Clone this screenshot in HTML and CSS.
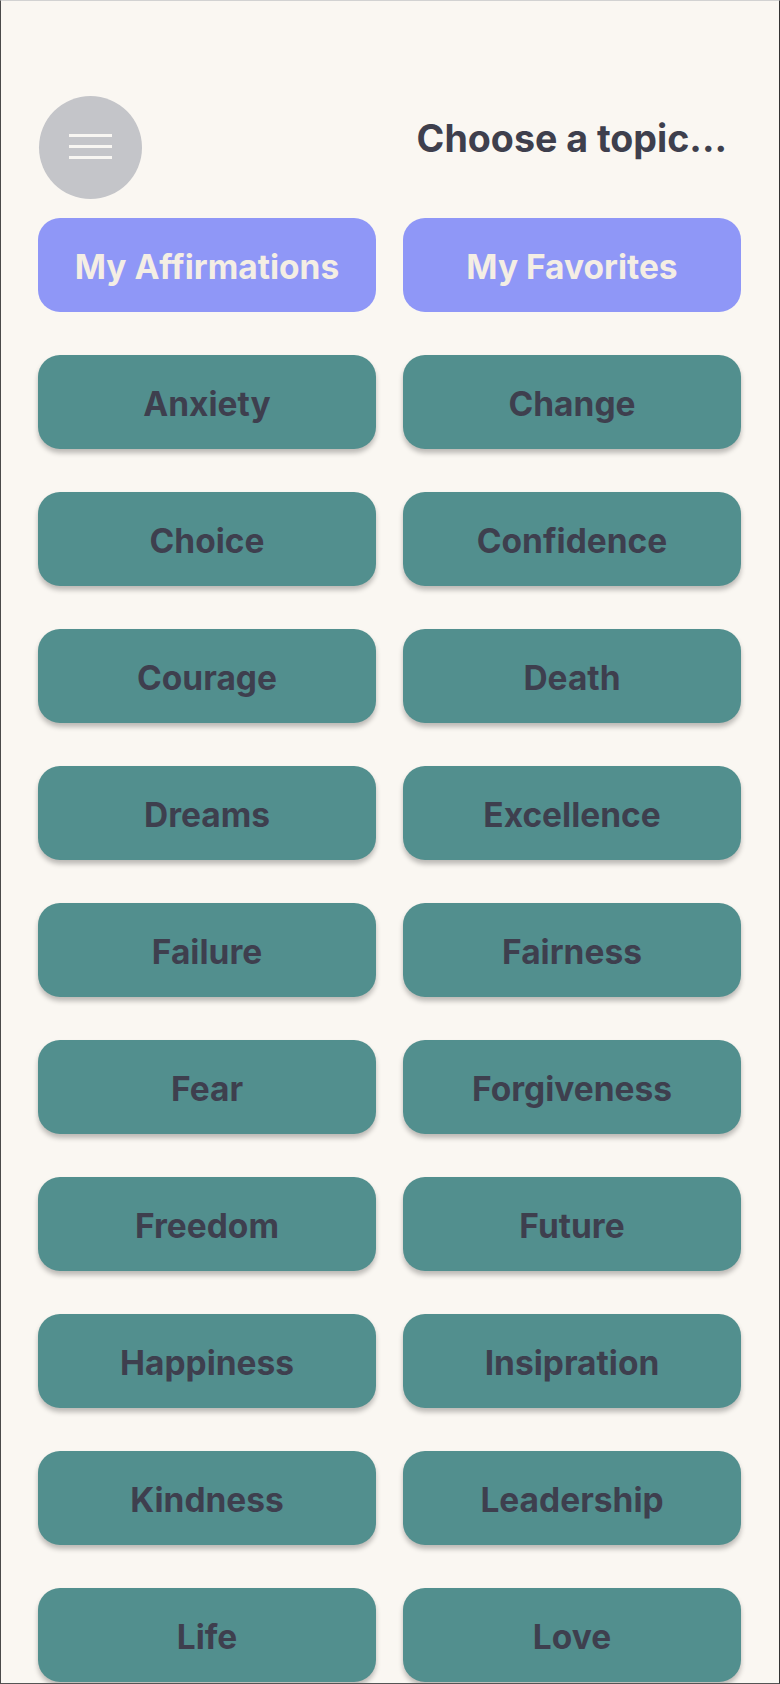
FILE: index.html
```html
<!DOCTYPE html>
<html lang="en">
<head>
<meta charset="utf-8">
<title>Choose a topic</title>
<link rel="stylesheet" href="styles.css">
</head>
<body>
<div class="screen">
  <header class="header">
    <button class="menu" aria-label="Menu">
      <svg width="43" height="26" viewBox="0 0 43 26">
        <rect x="0" y="0" width="43" height="3" fill="#f8f6f2"/>
        <rect x="0" y="11" width="43" height="3" fill="#f8f6f2"/>
        <rect x="0" y="22" width="43" height="3" fill="#f8f6f2"/>
      </svg>
    </button>
    <h1 class="title">Choose a topic...</h1>
  </header>
  <div class="grid">
    <a class="btn btn-primary">My Affirmations</a>
    <a class="btn btn-primary">My Favorites</a>
    <a class="btn btn-topic">Anxiety</a>
    <a class="btn btn-topic">Change</a>
    <a class="btn btn-topic">Choice</a>
    <a class="btn btn-topic">Confidence</a>
    <a class="btn btn-topic">Courage</a>
    <a class="btn btn-topic">Death</a>
    <a class="btn btn-topic">Dreams</a>
    <a class="btn btn-topic">Excellence</a>
    <a class="btn btn-topic">Failure</a>
    <a class="btn btn-topic">Fairness</a>
    <a class="btn btn-topic">Fear</a>
    <a class="btn btn-topic">Forgiveness</a>
    <a class="btn btn-topic">Freedom</a>
    <a class="btn btn-topic">Future</a>
    <a class="btn btn-topic">Happiness</a>
    <a class="btn btn-topic">Insipration</a>
    <a class="btn btn-topic">Kindness</a>
    <a class="btn btn-topic">Leadership</a>
    <a class="btn btn-topic">Life</a>
    <a class="btn btn-topic">Love</a>
  </div>
</div>
</body>
</html>
```
FILE: styles.css
```css
* { box-sizing: border-box; }
html, body {
  margin: 0;
  padding: 0;
  background: #faf7f2;
}
.screen {
  width: 780px;
  height: 1684px;
  overflow: hidden;
  background: #faf7f2;
  border-top: 1px solid #d2d2d2;
  border-left: 1px solid #4a4a4a;
  border-right: 1px solid #333333;
  border-bottom: 1px solid #555555;
  padding: 95px 38px 0 37px;
  font-family: Inter, "Noto Sans", sans-serif;
}
.header {
  display: flex;
  justify-content: space-between;
  align-items: flex-start;
  height: 103px;
  margin-bottom: 19px;
}
.menu {
  width: 103px;
  height: 103px;
  border-radius: 50%;
  background: #c4c5c9;
  border: none;
  padding: 0;
  margin-left: 1px;
  display: flex;
  align-items: center;
  justify-content: center;
}
.menu svg { display: block; margin-top: -2px; }
.title {
  margin: 20px 14px 0 0;
  font-size: 37.6px;
  line-height: 46px;
  font-weight: 700;
  color: #3e3f4d;
}
.grid {
  display: grid;
  grid-template-columns: 1fr 1fr;
  column-gap: 27px;
  row-gap: 43px;
}
.btn {
  height: 94px;
  border-radius: 22px;
  display: flex;
  align-items: center;
  justify-content: center;
  padding-top: 3px;
  font-size: 33.5px;
  font-weight: 700;
}
.btn-primary {
  background: #8f97f7;
  color: #f4eee4;
}
.btn-topic {
  background: #528f8e;
  color: #3e3f4e;
  box-shadow: 0 4px 5px rgba(0, 0, 0, 0.25);
}
```
